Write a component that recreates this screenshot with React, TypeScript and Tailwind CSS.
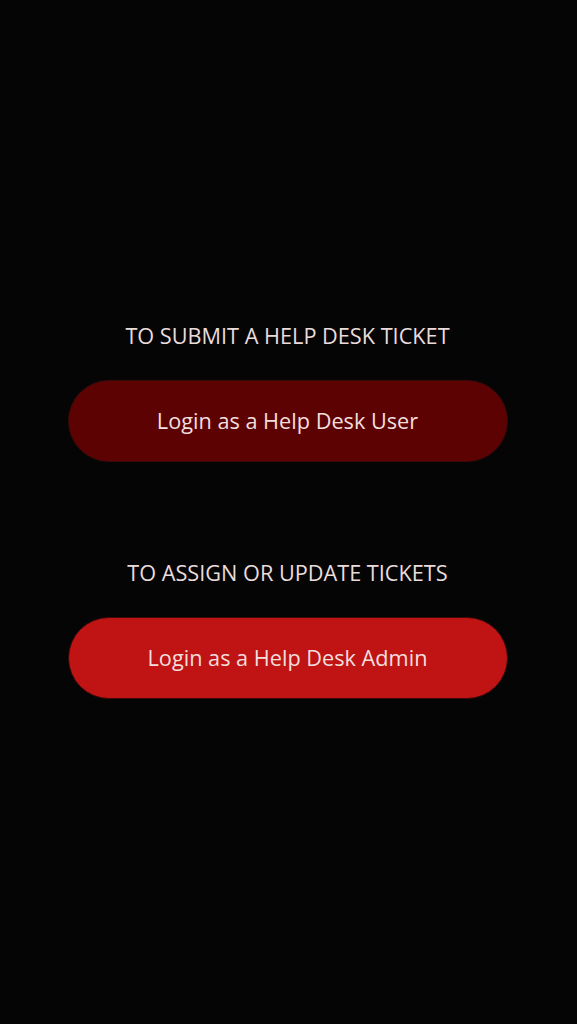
import React from 'react';

const LoginOption: React.FC<{ label: string; button: string; tone: 'dark' | 'bright' }> = ({ label, button, tone }) => (
  <div className="flex flex-col items-center">
    <p className="text-[21.7px] leading-[28px] text-[#eadcdc] uppercase">{label}</p>
    <button
      className={`mt-[30px] w-[440px] h-[82px] pt-[2px] rounded-full border border-[#3a0a0a] text-[21.7px] text-[#f3dede] ${
        tone === 'dark' ? 'bg-[#5c0202]' : 'bg-[#c01414]'
      }`}
    >
      {button}
    </button>
  </div>
);

export default function App() {
  return (
    <div
      className="min-h-screen w-full bg-[#050505] flex flex-col items-center justify-center gap-[97px] pr-[2px] pb-[4px]"
      style={{ fontFamily: '"Open Sans", "Noto Sans", sans-serif' }}
    >
      <LoginOption label="To submit a help desk ticket" button="Login as a Help Desk User" tone="dark" />
      <LoginOption label="To assign or update tickets" button="Login as a Help Desk Admin" tone="bright" />
    </div>
  );
}
